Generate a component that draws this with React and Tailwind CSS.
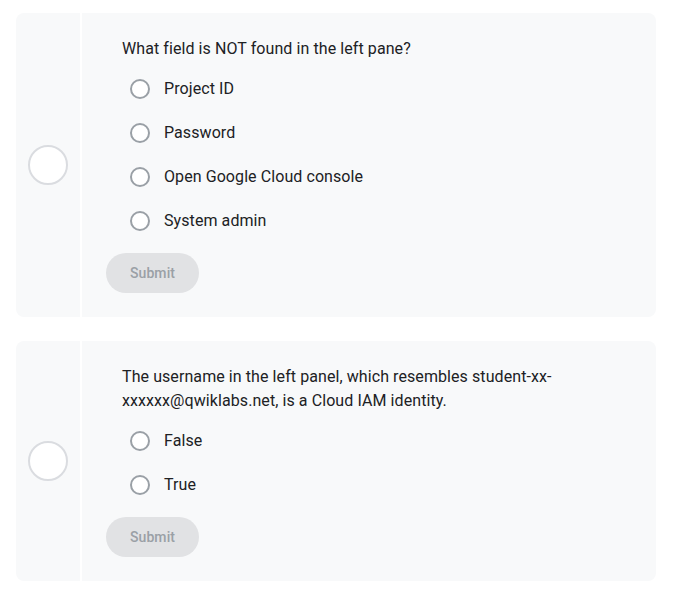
import React from 'react';

// Quiz blocks: a status circle on the left, question + options on the right

const questions = [
    {
        text: "What field is NOT found in the left pane?",
        options: ["Project ID", "Password", "Open Google Cloud console", "System admin"],
    },
    {
        text: "The username in the left panel, which resembles student-xx-xxxxxx@qwiklabs.net, is a Cloud IAM identity.",
        options: ["False", "True"],
    },
];

const QuizCard = ({ question }) => (
    <div className="flex bg-[#f8f9fa] rounded-lg overflow-hidden">
        {/* status column */}
        <div className="w-[66px] shrink-0 flex items-center justify-center border-r-2 border-white">
            <div className="w-10 h-10 rounded-full bg-white border-2 border-[#dadce0]" />
        </div>

        {/* question body */}
        <div className="flex-1 pl-10 pr-6 pt-6 pb-6 tracking-[0.08px]">
            <p className="text-base leading-6 text-[#202124] max-w-[440px] mb-1.5">{question.text}</p>
            <div className="flex flex-col">
                {question.options.map((opt, i) => (
                    <label key={i} className="h-11 flex items-center pl-2 cursor-pointer">
                        <span className="w-5 h-5 rounded-full border-2 border-[#9aa0a6] bg-white shrink-0" />
                        <span className="ml-3.5 text-base text-[#202124]">{opt}</span>
                    </label>
                ))}
            </div>
            <button className="mt-2.5 -ml-4 h-10 px-6 rounded-full bg-[#e1e2e4] text-sm text-[#9aa0a6] font-medium">
                Submit
            </button>
        </div>
    </div>
);

const App = () => {
    return (
        <div className="min-h-screen bg-white font-['Roboto','Liberation_Sans',sans-serif] pt-[13px] pl-4">
            <div className="w-[640px] flex flex-col gap-6">
                {questions.map((q, i) => (
                    <QuizCard key={i} question={q} />
                ))}
            </div>
        </div>
    );
};

export default App;
